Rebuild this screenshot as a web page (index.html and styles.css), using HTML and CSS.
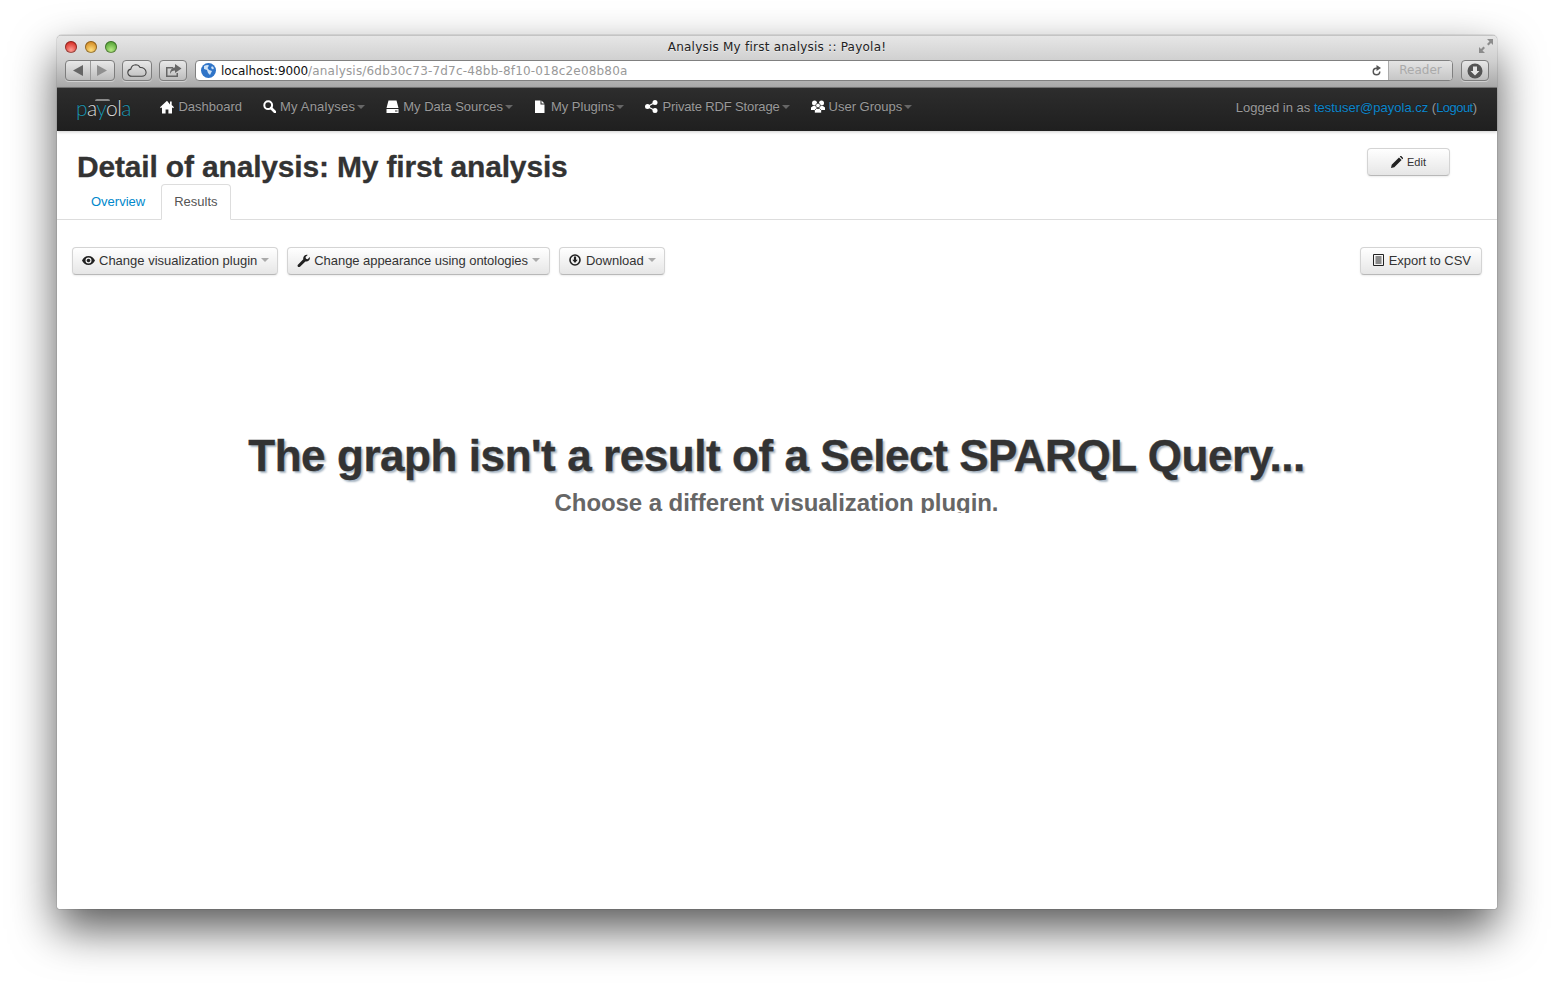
FILE: index.html
```html
<!DOCTYPE html>
<html lang="en">
<head>
    <meta charset="UTF-8">
    <meta name="viewport" content="width=device-width, initial-scale=1.0">
    <title>Analysis My first analysis :: Payola!</title>
    <link rel="stylesheet" href="styles.css">
</head>
<body>
    <div class="window">
        <!-- browser chrome -->
        <div class="chrome">
            <div class="title-row">
                <div class="lights">
                    <span class="light red"></span>
                    <span class="light yellow"></span>
                    <span class="light green"></span>
                </div>
                <div class="page-title">Analysis My first analysis :: Payola!</div>
                <svg class="expand" width="14" height="14" viewBox="0 0 14 14"><path d="M8 0h6v6l-2-2-2.500 2.500-1.500-1.500L10.500 2.500zM6 14H0V8l2 2 2.500-2.500 1.500 1.500L3.500 11.500z" fill="#8c8c8c"/></svg>
            </div>
            <div class="tool-row">
                <div class="tool nav-arrows">
                    <span class="half"><svg width="10" height="11" viewBox="0 0 10 11"><path d="M10 0v11L0 5.500z" fill="#666"/></svg></span>
                    <span class="half"><svg width="10" height="11" viewBox="0 0 10 11"><path d="M0 0v11l10-5.500z" fill="#8f8f8f"/></svg></span>
                </div>
                <div class="tool cloud">
                    <svg width="20" height="13" viewBox="0 0 20 13"><path d="M5 12.300C2.500 12.300 .8 10.700.8 8.600c0-1.800 1.300-3.200 3-3.500C4.300 2.800 6.200 1 8.600 .8c2.200 0 3.700 1.100 4.500 2.700 2.900-.4 5.900 1.800 6 4.700 0 2.300-1.700 4.100-4.200 4.100z" fill="none" stroke="#444" stroke-width="1.100"/></svg>
                </div>
                <div class="tool share">
                    <svg width="17" height="14" viewBox="0 0 17 14"><path d="M1 3h7v1.500H2.500v7h9V9H13v4H1z" fill="#666"/><path d="M10 0l6.500 4.500L10 9V6.500C7.500 6.500 6 7.500 5 10c0-4 2-6.500 5-6.500z" fill="#666"/></svg>
                </div>
                <div class="address">
                    <svg class="globe" width="15" height="15" viewBox="0 0 15 15"><circle cx="7.500" cy="7.500" r="7.500" fill="#2f74c8"/><path d="M3 3c2-1 4-1.500 5-.5L6.500 5 8 7l3 1-2 4-2-2-1-3-3-1z" fill="#cfe3f7"/><path d="M11 3l2 2-1 1.500-2-1.500z" fill="#cfe3f7"/></svg>
                    <div class="url"><span class="host">localhost:9000</span>/analysis/6db30c73-7d7c-48bb-8f10-018c2e08b80a</div>
                    <svg class="reload" width="11" height="12" viewBox="0 0 11 12"><path d="M5.500 2.500a4 4 0 1 0 4 4H8a2.500 2.500 0 1 1-2.500-2.500v2L10 3 5.500 0z" fill="#555"/></svg>
                    <div class="reader">Reader</div>
                </div>
                <div class="tool downloads">
                    <svg width="16" height="16" viewBox="0 0 16 16"><circle cx="8" cy="8" r="7.500" fill="#555"/><path d="M6 3.500h4V8h2.500L8 12.500 3.500 8H6z" fill="#e4e4e4"/></svg>
                </div>
            </div>
        </div>

        <!-- app navbar -->
        <div class="navbar">
            <a class="brand"><span class="teal">p</span><span class="pale">a</span><span class="teal">y</span><span class="pale">o</span><span class="pale">l</span><span class="teal">a</span></a>
            <ul class="nav">
                <li><svg class="ico" width="14" height="14" viewBox="0 0 14 14"><path d="M7 .8L0 7.200l1 1 1-.9V13.500h3.600V9.500h2.800v4H12V7.300l1 .9 1-1-2.300-2.100V1.500H10v3z" fill="#fff"/></svg>Dashboard</li>
                <li class="wide"><svg class="ico" width="13" height="13" viewBox="0 0 13 13"><circle cx="5.200" cy="5.200" r="3.900" fill="none" stroke="#fff" stroke-width="2"/><path d="M8 8l4 4" stroke="#fff" stroke-width="2.600" stroke-linecap="round"/></svg>My Analyses<b class="caret"></b></li>
                <li><svg class="ico" width="13" height="13" viewBox="0 0 13 13"><path d="M2.500 .5h8L12.500 8H.5zM.5 9h12v4H.5z" fill="#fff"/><path d="M9 10.500h2.500v1H9z" fill="#333"/></svg>My Data Sources<b class="caret"></b></li>
                <li><svg class="ico" width="13" height="13" viewBox="0 0 13 13"><path d="M1 .5h5.500v4h4V13H1zM7.500 .5l3 3h-3z" fill="#fff"/></svg>My Plugins<b class="caret"></b></li>
                <li class="tight"><svg class="ico" width="13" height="13" viewBox="0 0 13 13"><circle cx="2.500" cy="6.500" r="2.500" fill="#fff"/><circle cx="10" cy="2.500" r="2.500" fill="#fff"/><circle cx="10" cy="10.500" r="2.500" fill="#fff"/><path d="M2.500 6.500L10 2.500M2.500 6.500l7.500 4" stroke="#fff" stroke-width="1.200"/></svg>Private RDF Storage<b class="caret"></b></li>
                <li><svg class="ico" width="14" height="13" viewBox="0 0 14 13"><circle cx="3.500" cy="3" r="2.500" fill="#fff"/><circle cx="10.500" cy="3" r="2.500" fill="#fff"/><path d="M0 10V7.500L2 6h3l1 1v3zM8 10V7l1-1h3l2 1.500V10z" fill="#fff"/><circle cx="7" cy="5.500" r="2.300" fill="#fff" stroke="#222" stroke-width=".7"/><path d="M3.500 13v-2.500l2-2h3l2 2V13z" fill="#fff" stroke="#222" stroke-width=".7"/></svg>User Groups<b class="caret"></b></li>
            </ul>
            <div class="login">Logged in as <a>testuser@payola.cz</a> (<a class="logout">Logout</a>)</div>
        </div>

        <!-- page -->
        <div class="page-head">
            <div class="head-left">
                <h1 class="page-heading">Detail of analysis: My first analysis</h1>
                <ul class="tabs">
                    <li class="tab"><a>Overview</a></li>
                    <li class="tab active">Results</li>
                </ul>
            </div>
            <button class="btn btn-small"><svg class="btn-ico" width="12" height="12" viewBox="0 0 12 12"><path d="M0 12l.7-3.300L8 1.400l2.600 2.600-7.300 7.300zM8.800 .6l.5-.5c.3-.2.700-.2 1 0l1.600 1.600c.2.300.2.700 0 1l-.5.5z" fill="#222"/></svg>Edit</button>
        </div>

        <div class="toolbar">
            <div class="toolbar-group">
                <button class="btn"><svg class="btn-ico" width="13" height="9" viewBox="0 0 13 9"><path d="M6.500 0C3.500 0 1.200 1.900 0 4.500 1.200 7.100 3.500 9 6.500 9s5.300-1.900 6.500-4.500C11.800 1.900 9.500 0 6.500 0zm0 7.500a3 3 0 1 1 0-6 3 3 0 0 1 0 6z" fill="#222"/><circle cx="6.500" cy="4.500" r="1.800" fill="#222"/></svg>Change visualization plugin<b class="caret"></b></button>
                <button class="btn btn-tight"><svg class="btn-ico" width="13" height="13" viewBox="0 0 13 13"><path d="M12.800 3c.3 1.300 0 2.600-1 3.500-.9.900-2.200 1.200-3.400.9L3 12.800c-.6.500-1.500.5-2-.1-.6-.5-.6-1.400-.1-2l5.400-5.400C6 4.100 6.300 2.800 7.300 1.800 8.200.9 9.500.6 10.700.9L8.500 3.100l.5 1.600 1.600.5z" fill="#222"/></svg>Change appearance using ontologies<b class="caret"></b></button>
                <button class="btn"><svg class="btn-ico" width="13" height="12" viewBox="0 0 13 12"><circle cx="6" cy="6" r="5" fill="none" stroke="#222" stroke-width="1.600"/><path d="M4.900 2.500h2.200v3.200h1.600L6 9 3.300 5.700h1.600z" fill="#222"/></svg>Download<b class="caret"></b></button>
            </div>
            <button class="btn btn-export"><svg class="btn-ico" width="12" height="12" viewBox="-1 0 12 12"><path d="M.5 .5h10v11H.5z" fill="none" stroke="#222"/><path d="M2.500 2.500h6v1h-6zM2.500 4.500h6v1h-6zM2.500 6.500h6v1h-6zM2.500 8.500h6v1h-6z" fill="#222"/></svg>Export to CSV</button>
        </div>

        <div class="notice">
            <h2 class="notice-title">The graph isn't a result of a Select SPARQL Query...</h2>
            <h3 class="notice-sub">Choose a different visualization plugin.</h3>
        </div>
    </div>
</body>
</html>
```

FILE: styles.css
```css
html, body {
    margin: 0;
    height: 100%;
    background: #fff;
    overflow: hidden;
}
body {
    padding: 35px 57px 0;
    box-sizing: border-box;
    font-family: "Liberation Sans", Arial, sans-serif;
}
ul {
    list-style: none;
    margin: 0;
    padding: 0;
}
.window {
    width: 1440px;
    height: 874px;
    background: #fff;
    border-radius: 5px 5px 2px 2px;
    box-shadow: 0 20px 45px rgba(0, 0, 0, 0.66), 0 0 1px rgba(0, 0, 0, 0.8);
    display: flex;
    flex-direction: column;
    overflow: hidden;
}

/* chrome */
.chrome {
    height: 53px;
    flex: none;
    box-sizing: border-box;
    padding: 0 8px;
    background: linear-gradient(#e6e6e6, #cfcfcf 50%, #a9a9a9);
    border-top: 1px solid #c4c4c4;
    border-bottom: 1px solid #777;
}
.title-row {
    height: 22px;
    margin-bottom: 2px;
    display: flex;
    align-items: center;
    position: relative;
}
.lights {
    display: flex;
    gap: 8px;
    width: 60px;
}
.light {
    width: 12px;
    height: 12px;
    border-radius: 50%;
    box-shadow: inset 0 0 0 1px rgba(0, 0, 0, 0.35);
}
.red { background: radial-gradient(circle at 50% 75%, #ff9c93, #d8342c 70%); }
.yellow { background: radial-gradient(circle at 50% 75%, #ffdf7e, #d6902a 70%); }
.green { background: radial-gradient(circle at 50% 75%, #b6ea84, #5aa83a 70%); }
.page-title {
    flex: 1;
    text-align: center;
    font-family: "DejaVu Sans", sans-serif;
    font-size: 12px;
    color: #222;
    text-shadow: 0 1px 0 rgba(255, 255, 255, 0.5);
    margin-right: 60px;
    margin-left: -60px;
    padding-left: 60px;
    letter-spacing: 0.23px;
}
.expand {
    position: absolute;
    right: -4px;
    top: 3px;
}
.tool-row {
    display: flex;
    height: 21px;
    align-items: stretch;
}
.tool {
    box-sizing: border-box;
    border: 1px solid #7d7d7d;
    border-radius: 4px;
    background: linear-gradient(#e8e8e8, #bcbcbc);
    box-shadow: 0 1px 0 rgba(255, 255, 255, 0.4);
    display: flex;
    align-items: center;
    justify-content: center;
}
.nav-arrows {
    width: 50px;
    margin-right: 7px;
}
.half {
    flex: 1;
    height: 100%;
    display: flex;
    align-items: center;
    justify-content: center;
}
.half + .half { border-left: 1px solid #9a9a9a; }
.cloud {
    width: 30px;
    margin-right: 7px;
}
.share {
    width: 28px;
    margin-right: 8px;
}
.address {
    width: 1258px;
    margin-right: 8px;
    box-sizing: border-box;
    border: 1px solid #808080;
    border-radius: 4px;
    background: #fff;
    display: flex;
    align-items: center;
    overflow: hidden;
}
.globe { margin: 0 5px 0 5px; }
.url {
    flex: 1;
    font-family: "DejaVu Sans", sans-serif;
    font-size: 12px;
    color: #999;
    letter-spacing: 0.18px;
}
.host {
    color: #111;
    letter-spacing: -0.1px;
}
.reload { margin-right: 6px; }
.reader {
    width: 64px;
    height: 100%;
    box-sizing: border-box;
    text-align: center;
    font-family: "DejaVu Sans", sans-serif;
    font-size: 12px;
    line-height: 19px;
    color: #aaa;
    background: linear-gradient(#e4e4e4, #c6c6c6);
    border-left: 1px solid #aaa;
}
.downloads { width: 28px; }

/* navbar */
.navbar {
    height: 43px;
    flex: none;
    box-sizing: border-box;
    padding: 0 20px 5px;
    background: linear-gradient(#2d2d2d, #1f1f1f);
    display: flex;
    align-items: center;
    box-shadow: 0 1px 3px rgba(0, 0, 0, 0.2);
    color: #999;
    font-size: 13px;
    text-shadow: 0 -1px 0 rgba(0, 0, 0, 0.3);
}
.brand {
    position: relative;
    font-family: Lato, sans-serif;
    font-weight: 300;
    font-size: 21px;
    width: 84px;
    margin: 1px 0 0 -1px;
    letter-spacing: -0.6px;
}
.brand::before {
    content: "";
    position: absolute;
    left: 19px;
    top: 4px;
    width: 15px;
    height: 2px;
    background: #8a8a8a;
    border-radius: 2px 2px 0 0;
}
.teal { color: #1a94b0; }
.pale { color: #d8d8d8; }
.nav {
    display: flex;
    gap: 21px;
    margin: -1px 0 0 0.4px;
}
.nav li {
    display: flex;
    align-items: center;
    white-space: nowrap;
}
.nav li.wide { letter-spacing: 0.2px; }
.nav li.tight { letter-spacing: -0.15px; }
.ico {
    margin-right: 4px;
}
.caret {
    display: inline-block;
    margin-left: 2px;
    border-top: 4px solid #666;
    border-left: 4px solid transparent;
    border-right: 4px solid transparent;
}
.login {
    margin-left: auto;
}
.login a { color: #0a85cc; }
.login a.logout { letter-spacing: -0.55px; }

/* page head */
.page-head {
    height: 89px;
    flex: none;
    box-sizing: border-box;
    border-bottom: 1px solid #ddd;
    padding: 0 47px 0 20px;
    display: flex;
    justify-content: space-between;
    align-items: flex-start;
}
.page-heading {
    margin: 18px 0 0;
    font-size: 30px;
    line-height: 35px;
    color: #333;
    letter-spacing: -0.17px;
    -webkit-text-stroke: 0.3px #333;
}
.tabs {
    display: flex;
    margin-top: 0;
}
.tab {
    height: 36px;
    box-sizing: border-box;
    line-height: 35px;
    font-size: 13px;
    padding: 0 14px;
    color: #555;
}
.tab a { color: #0088cc; }
.tab.active {
    border: 1px solid #ddd;
    border-bottom-color: #fff;
    border-radius: 4px 4px 0 0;
    line-height: 33px;
    padding: 0 12px 0 12px;
    background: #fff;
    margin-left: 2px;
}
.btn {
    height: 28px;
    box-sizing: border-box;
    padding: 0 8px 2px 9px;
    border: 1px solid #d4d4d4;
    border-bottom-color: #b8b8b8;
    border-radius: 4px;
    background: linear-gradient(#fff, #e6e6e6);
    box-shadow: 0 1px 2px rgba(0, 0, 0, 0.08);
    font-family: "Liberation Sans", Arial, sans-serif;
    font-size: 13px;
    color: #333;
    display: inline-flex;
    align-items: center;
    white-space: nowrap;
}
.btn .caret {
    border-top-color: #aaa;
    margin-left: 4px;
}
.btn-ico { margin-right: 4px; }
.btn-tight {
    letter-spacing: -0.05px;
    padding-right: 9px;
}
.btn-export { padding: 0 10px 2px 11px; }
.btn-export .btn-ico { margin-right: 5px; }
.btn-small {
    margin-top: 17px;
    width: 83px;
    padding: 0;
    justify-content: center;
    font-size: 11px;
}

/* toolbar */
.toolbar {
    display: flex;
    justify-content: space-between;
    padding: 27px 15px 0;
    flex: none;
}
.toolbar-group {
    display: flex;
    gap: 9px;
}

/* notice */
.notice {
    text-align: center;
    margin-top: 153px;
    margin-left: -1px;
}
.notice-title {
    margin: 0;
    font-size: 44px;
    line-height: 56px;
    color: #333;
    letter-spacing: -0.43px;
    -webkit-text-stroke: 0.4px #333;
    text-shadow: 2px 2px 2px #a9b7c4;
}
.notice-sub {
    margin: 5px 0 0;
    height: 24px;
    overflow: hidden;
    font-size: 24px;
    line-height: 28px;
    color: #666;
    letter-spacing: -0.07px;
}
```
